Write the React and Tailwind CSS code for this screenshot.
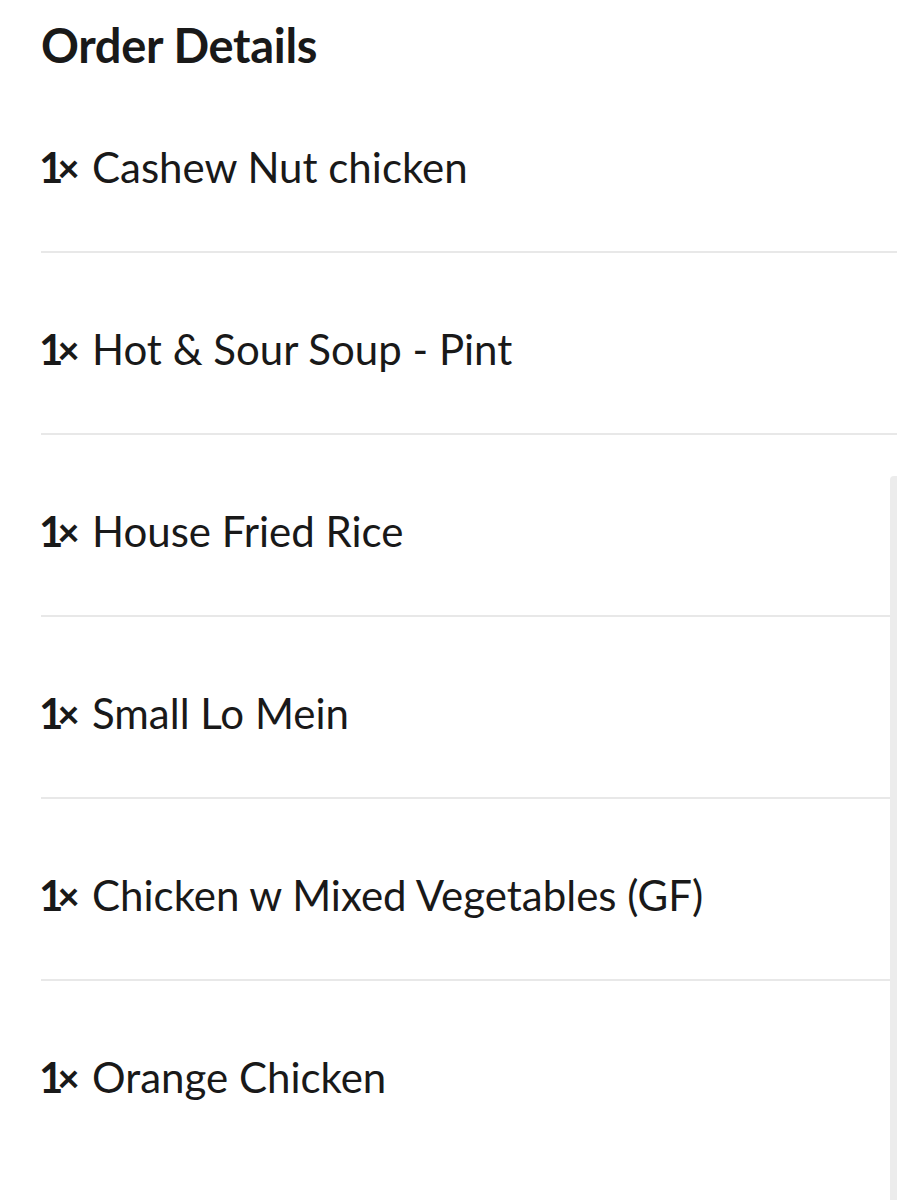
export default function App() {
  const items = [
    "Cashew Nut chicken",
    "Hot & Sour Soup - Pint",
    "House Fried Rice",
    "Small Lo Mein",
    "Chicken w Mixed Vegetables (GF)",
    "Orange Chicken",
  ];
  return (
    <div
      className="relative w-[897px] h-[1200px] overflow-hidden bg-white text-[#191919]"
      style={{ fontFamily: "Lato, 'Open Sans', sans-serif" }}
    >
      <div className="pl-[41px] pt-[17px]">
        <h1 className="text-[47px] leading-[56px] font-bold tracking-[-0.3px]">Order Details</h1>
        <div className="mt-[70px]">
          {items.map((t, i) => (
            <div key={i}>
              <div className="flex items-center h-[48px] text-[42px]">
                <span className="font-bold w-[51px] shrink-0 whitespace-nowrap flex items-center">
                  <span className="ml-[-2px] tracking-[-8px]">1</span>
                  <span className="text-[38px] font-black ml-[2px]">×</span>
                </span>
                <span className="whitespace-nowrap">{t}</span>
              </div>
              {i < items.length - 1 && (
                <>
                  <div className="h-[60px]" />
                  <div className="h-[2px] bg-[#e8e8e8] mb-[72px]" />
                </>
              )}
            </div>
          ))}
        </div>
      </div>
      <div className="absolute right-0 top-[476px] bottom-0 w-[7px] bg-[#ececec] rounded-tl-[4px]" />
    </div>
  );
}
